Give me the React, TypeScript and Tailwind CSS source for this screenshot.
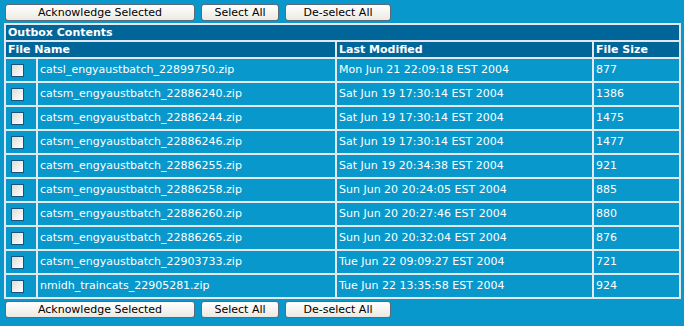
import React from "react";

type OutboxFile = {
  name: string;
  modified: string;
  size: string;
};

const files: OutboxFile[] = [
  { name: "catsl_engyaustbatch_22899750.zip", modified: "Mon Jun 21 22:09:18 EST 2004", size: "877" },
  { name: "catsm_engyaustbatch_22886240.zip", modified: "Sat Jun 19 17:30:14 EST 2004", size: "1386" },
  { name: "catsm_engyaustbatch_22886244.zip", modified: "Sat Jun 19 17:30:14 EST 2004", size: "1475" },
  { name: "catsm_engyaustbatch_22886246.zip", modified: "Sat Jun 19 17:30:14 EST 2004", size: "1477" },
  { name: "catsm_engyaustbatch_22886255.zip", modified: "Sat Jun 19 20:34:38 EST 2004", size: "921" },
  { name: "catsm_engyaustbatch_22886258.zip", modified: "Sun Jun 20 20:24:05 EST 2004", size: "885" },
  { name: "catsm_engyaustbatch_22886260.zip", modified: "Sun Jun 20 20:27:46 EST 2004", size: "880" },
  { name: "catsm_engyaustbatch_22886265.zip", modified: "Sun Jun 20 20:32:04 EST 2004", size: "876" },
  { name: "catsm_engyaustbatch_22903733.zip", modified: "Tue Jun 22 09:09:27 EST 2004", size: "721" },
  { name: "nmidh_traincats_22905281.zip", modified: "Tue Jun 22 13:35:58 EST 2004", size: "924" },
];

const btn =
  "h-[17px] rounded-[3px] border border-[#5a6a7a] bg-gradient-to-b from-white to-[#ece9e2] text-[11px] leading-none text-black";

const ButtonBar = () => (
  <div className="flex gap-[6px] pl-[5px]">
    <button className={`${btn} w-[190px]`}>Acknowledge Selected</button>
    <button className={`${btn} w-[78px]`}>Select All</button>
    <button className={`${btn} w-[106px]`}>De-select All</button>
  </div>
);

const cell = "border border-[#e4e8ec] px-[2px] text-left align-top";

export default function App() {
  return (
    <div
      className="h-[326px] w-[684px] bg-[#0898cc] pt-[4px] text-white"
      style={{ fontFamily: '"DejaVu Sans", Verdana, sans-serif' }}
    >
      <ButtonBar />
      <table className="mx-[4px] mt-[2px] mb-[2px] w-[677px] border-separate border-spacing-0 border border-[#e4e8ec] text-[11px]">
        <thead>
          <tr className="bg-[#006699] font-bold">
            <th colSpan={4} className={`${cell} h-[17px] pt-[1px] leading-[14px]`}>
              Outbox Contents
            </th>
          </tr>
          <tr className="bg-[#006699] font-bold">
            <th colSpan={2} className={`${cell} h-[17px] pt-[1px] leading-[14px]`}>
              File Name
            </th>
            <th className={`${cell} w-[257px] pt-[1px] leading-[14px]`}>Last Modified</th>
            <th className={`${cell} w-[87px] pt-[1px] leading-[14px]`}>File Size</th>
          </tr>
        </thead>
        <tbody>
          {files.map((f) => (
            <tr key={f.name} className="h-[24px]">
              <td className={`${cell} w-[32px] pt-[5px] pl-[5px]`}>
                <span className="block h-[13px] w-[13px] border border-[#1c5180] bg-gradient-to-br from-[#dcdcd6] to-white" />
              </td>
              <td className={`${cell} pt-[3px]`}>{f.name}</td>
              <td className={`${cell} pt-[3px]`}>{f.modified}</td>
              <td className={`${cell} pt-[3px]`}>{f.size}</td>
            </tr>
          ))}
        </tbody>
      </table>
      <ButtonBar />
    </div>
  );
}
